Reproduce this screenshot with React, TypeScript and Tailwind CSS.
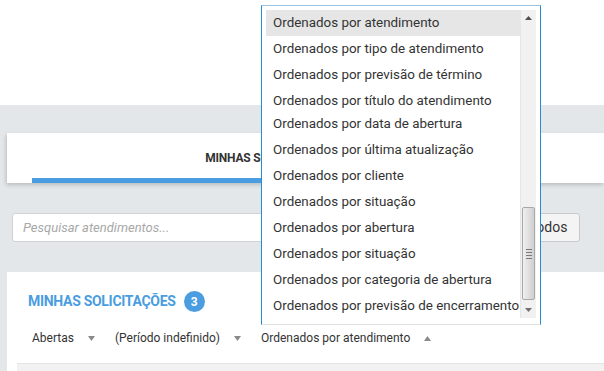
import { useState } from 'react';

const sortOptions = [
  'Ordenados por atendimento',
  'Ordenados por tipo de atendimento',
  'Ordenados por previsão de término',
  'Ordenados por título do atendimento',
  'Ordenados por data de abertura',
  'Ordenados por última atualização',
  'Ordenados por cliente',
  'Ordenados por situação',
  'Ordenados por abertura',
  'Ordenados por situação',
  'Ordenados por categoria de abertura',
  'Ordenados por previsão de encerramento',
];

function Caret({ up }: { up?: boolean }) {
  return (
    <svg width="7" height="5" viewBox="0 0 7 5" className="ml-[14px] text-[#8a8a8a]">
      {up ? <path d="M0 5 L3.5 0 L7 5 Z" fill="currentColor" /> : <path d="M0 0 L7 0 L3.5 5 Z" fill="currentColor" />}
    </svg>
  );
}

function Scrollbar() {
  return (
    <div className="relative w-[16px] h-[308px] bg-[#f1f1f1] border-l border-[#e6e6e6]">
      {/* up arrow */}
      <div className="h-[16px] flex items-center justify-center">
        <svg width="7" height="4" viewBox="0 0 7 4"><path d="M0 4 L3.5 0 L7 4 Z" fill="#505050" /></svg>
      </div>
      {/* thumb */}
      <div className="absolute left-[1px] right-[1px] top-[197px] h-[93px] rounded-[2px] border border-[#a9a9a9] bg-gradient-to-r from-[#f0f0f0] to-[#cfcfcf] flex items-center justify-center">
        <div className="flex flex-col gap-[2px]">
          <div className="w-[6px] h-px bg-[#7a7a7a]" />
          <div className="w-[6px] h-px bg-[#7a7a7a]" />
          <div className="w-[6px] h-px bg-[#7a7a7a]" />
          <div className="w-[6px] h-px bg-[#7a7a7a]" />
        </div>
      </div>
      {/* down arrow */}
      <div className="absolute bottom-0 left-0 right-0 h-[16px] flex items-center justify-center">
        <svg width="7" height="4" viewBox="0 0 7 4"><path d="M0 0 L7 0 L3.5 4 Z" fill="#707070" /></svg>
      </div>
    </div>
  );
}

export default function App() {
  const [selected, setSelected] = useState(0);

  return (
    <div className="relative w-[604px] h-[371px] overflow-hidden bg-[#e3e7ea] font-['Roboto',sans-serif] text-[#333]">
      <div className="h-[105px] bg-white" />

      {/* Tabs card */}
      <div className="mt-[28px] ml-[7px] h-[50px] bg-white shadow-[-1px_2px_4px_rgba(0,0,0,0.18)] flex pl-[25px]">
        <div className="w-[474px] flex flex-col">
          <div className="flex-1 flex items-center justify-center pt-[4px] text-[12px] font-bold tracking-[-0.2px] text-[#333]">
            MINHAS SOLICITAÇÕES
          </div>
          <div className="h-[5px] bg-[#4a9de0]" />
        </div>
        <div className="flex-1" />
      </div>

      {/* Search */}
      <div className="mt-[30px] ml-[12px] mr-[24px] flex gap-[6px]">
        <div className="flex-1 h-[29px] bg-white border border-[#cfd3d6] rounded-[3px] flex items-center pl-[10px]">
          <span className="italic text-[13px] text-[#a8a8a8]">Pesquisar atendimentos...</span>
        </div>
        <div className="w-[64px] h-[29px] bg-[#f4f4f4] border border-[#c7cbce] rounded-[3px] flex items-center justify-center text-[14px] text-[#333]">
          Todos
        </div>
      </div>

      {/* Requests card */}
      <div className="mt-[30px] ml-[7px] h-[120px] bg-white">
        <div className="pt-[19px] pl-[21px] flex items-center gap-[8px]">
          <span className="text-[14px] font-bold text-[#4a9de0] tracking-[-0.3px]">MINHAS SOLICITAÇÕES</span>
          <span className="w-[21px] h-[21px] rounded-full bg-[#4a9de0] text-white text-[12px] font-bold flex items-center justify-center">3</span>
        </div>
        <div className="mt-[17px] pl-[25px] flex items-center text-[12px] text-[#333]">
          <div className="flex items-center">Abertas<Caret /></div>
          <div className="ml-[20px] flex items-center">(Período indefinido)<Caret /></div>
          <div className="ml-[20px] flex items-center">Ordenados por atendimento<Caret up /></div>
        </div>
        <div className="mt-[16px] ml-[10px] h-[10px] bg-[#f2f2f2] border-t border-[#e4e4e4]" />
      </div>

      {/* Open sort dropdown */}
      <div className="absolute left-[261px] top-[5px] w-[280px] h-[320px] bg-white border border-[#2a8cd0] border-t-[#9cc4e2] border-b-[#e2e2e2] p-[4px] flex">
        <div className="flex-1 h-[310px] overflow-hidden">
          {sortOptions.map((opt, i) => (
            <div
              key={i}
              onClick={() => setSelected(i)}
              className={`${i === 3 ? 'h-[23px] pt-[3px]' : 'h-[26px]'} flex items-center pl-[7px] text-[13.4px] whitespace-nowrap text-[#333] ${i === selected ? 'bg-[#e6e6e6]' : ''}`}
            >
              {opt}
            </div>
          ))}
        </div>
        <Scrollbar />
      </div>
    </div>
  );
}
